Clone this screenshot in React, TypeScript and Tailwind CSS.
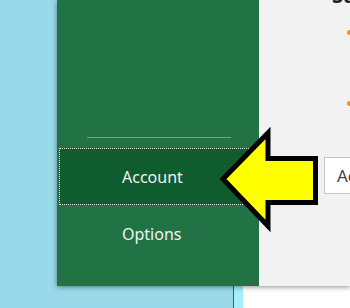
export default function App() {
  return (
    <div className="relative w-[350px] h-[308px] overflow-hidden bg-[#99d9ea]" style={{ fontFamily: '"Noto Sans", "Open Sans", sans-serif' }}>
      {/* background window */}
      <div className="absolute left-[233px] top-[250px] right-0 bottom-0 flex border-l border-[#4a5a60]">
        <div className="w-[9px] bg-[#a6eefa]" />
        <div className="flex-1 bg-white" />
      </div>
      {/* main window */}
      <div className="absolute left-[57px] top-0 w-[293px] h-[286px] flex shadow-[0_1px_5px_rgba(0,0,0,0.45)]">
        <div className="w-[202px] bg-[#217346] flex flex-col pt-[137px]">
          <div className="h-px ml-[30px] mr-[28px] bg-[#63a981]" />
          <div className="mt-[10px] ml-[2px] h-[57px] bg-[#0f5c2f] border border-dotted border-[#e8e8e8] flex items-center pl-[62px] text-[16px] text-[#f2f2f2]">
            Account
          </div>
          <div className="ml-[2px] h-[57px] flex items-center pl-[63px] text-[16px] text-[#f2f2f2]">
            Options
          </div>
        </div>
        <div className="flex-1 bg-[#f2f2f2] border-l border-white relative">
          <div className="absolute left-[72px] top-[-18px] text-[20px] font-bold leading-[28px] text-[#222] whitespace-nowrap">Sub</div>
          <div className="absolute left-[87px] top-[30px] w-[5px] h-[5px] rounded-full bg-[#f7931e]" />
          <div className="absolute left-[87px] top-[101px] w-[5px] h-[5px] rounded-full bg-[#f7931e]" />
          <div className="absolute left-[64px] top-[157px] w-[60px] h-[37px] bg-white border border-[#c6c6c6] flex items-center pl-[12px] text-[17px] text-[#444]">
            Account
          </div>
        </div>
      </div>
      {/* arrow */}
      <svg className="absolute left-0 top-0" width="350" height="308" viewBox="0 0 350 308">
        <polygon
          points="223,179 268,133 268,158.5 315.5,158.5 315.5,202.5 268,202.5 268,226"
          fill="#ffff00"
          stroke="#000"
          strokeWidth="5"
          strokeLinejoin="miter"
        />
      </svg>
    </div>
  );
}
